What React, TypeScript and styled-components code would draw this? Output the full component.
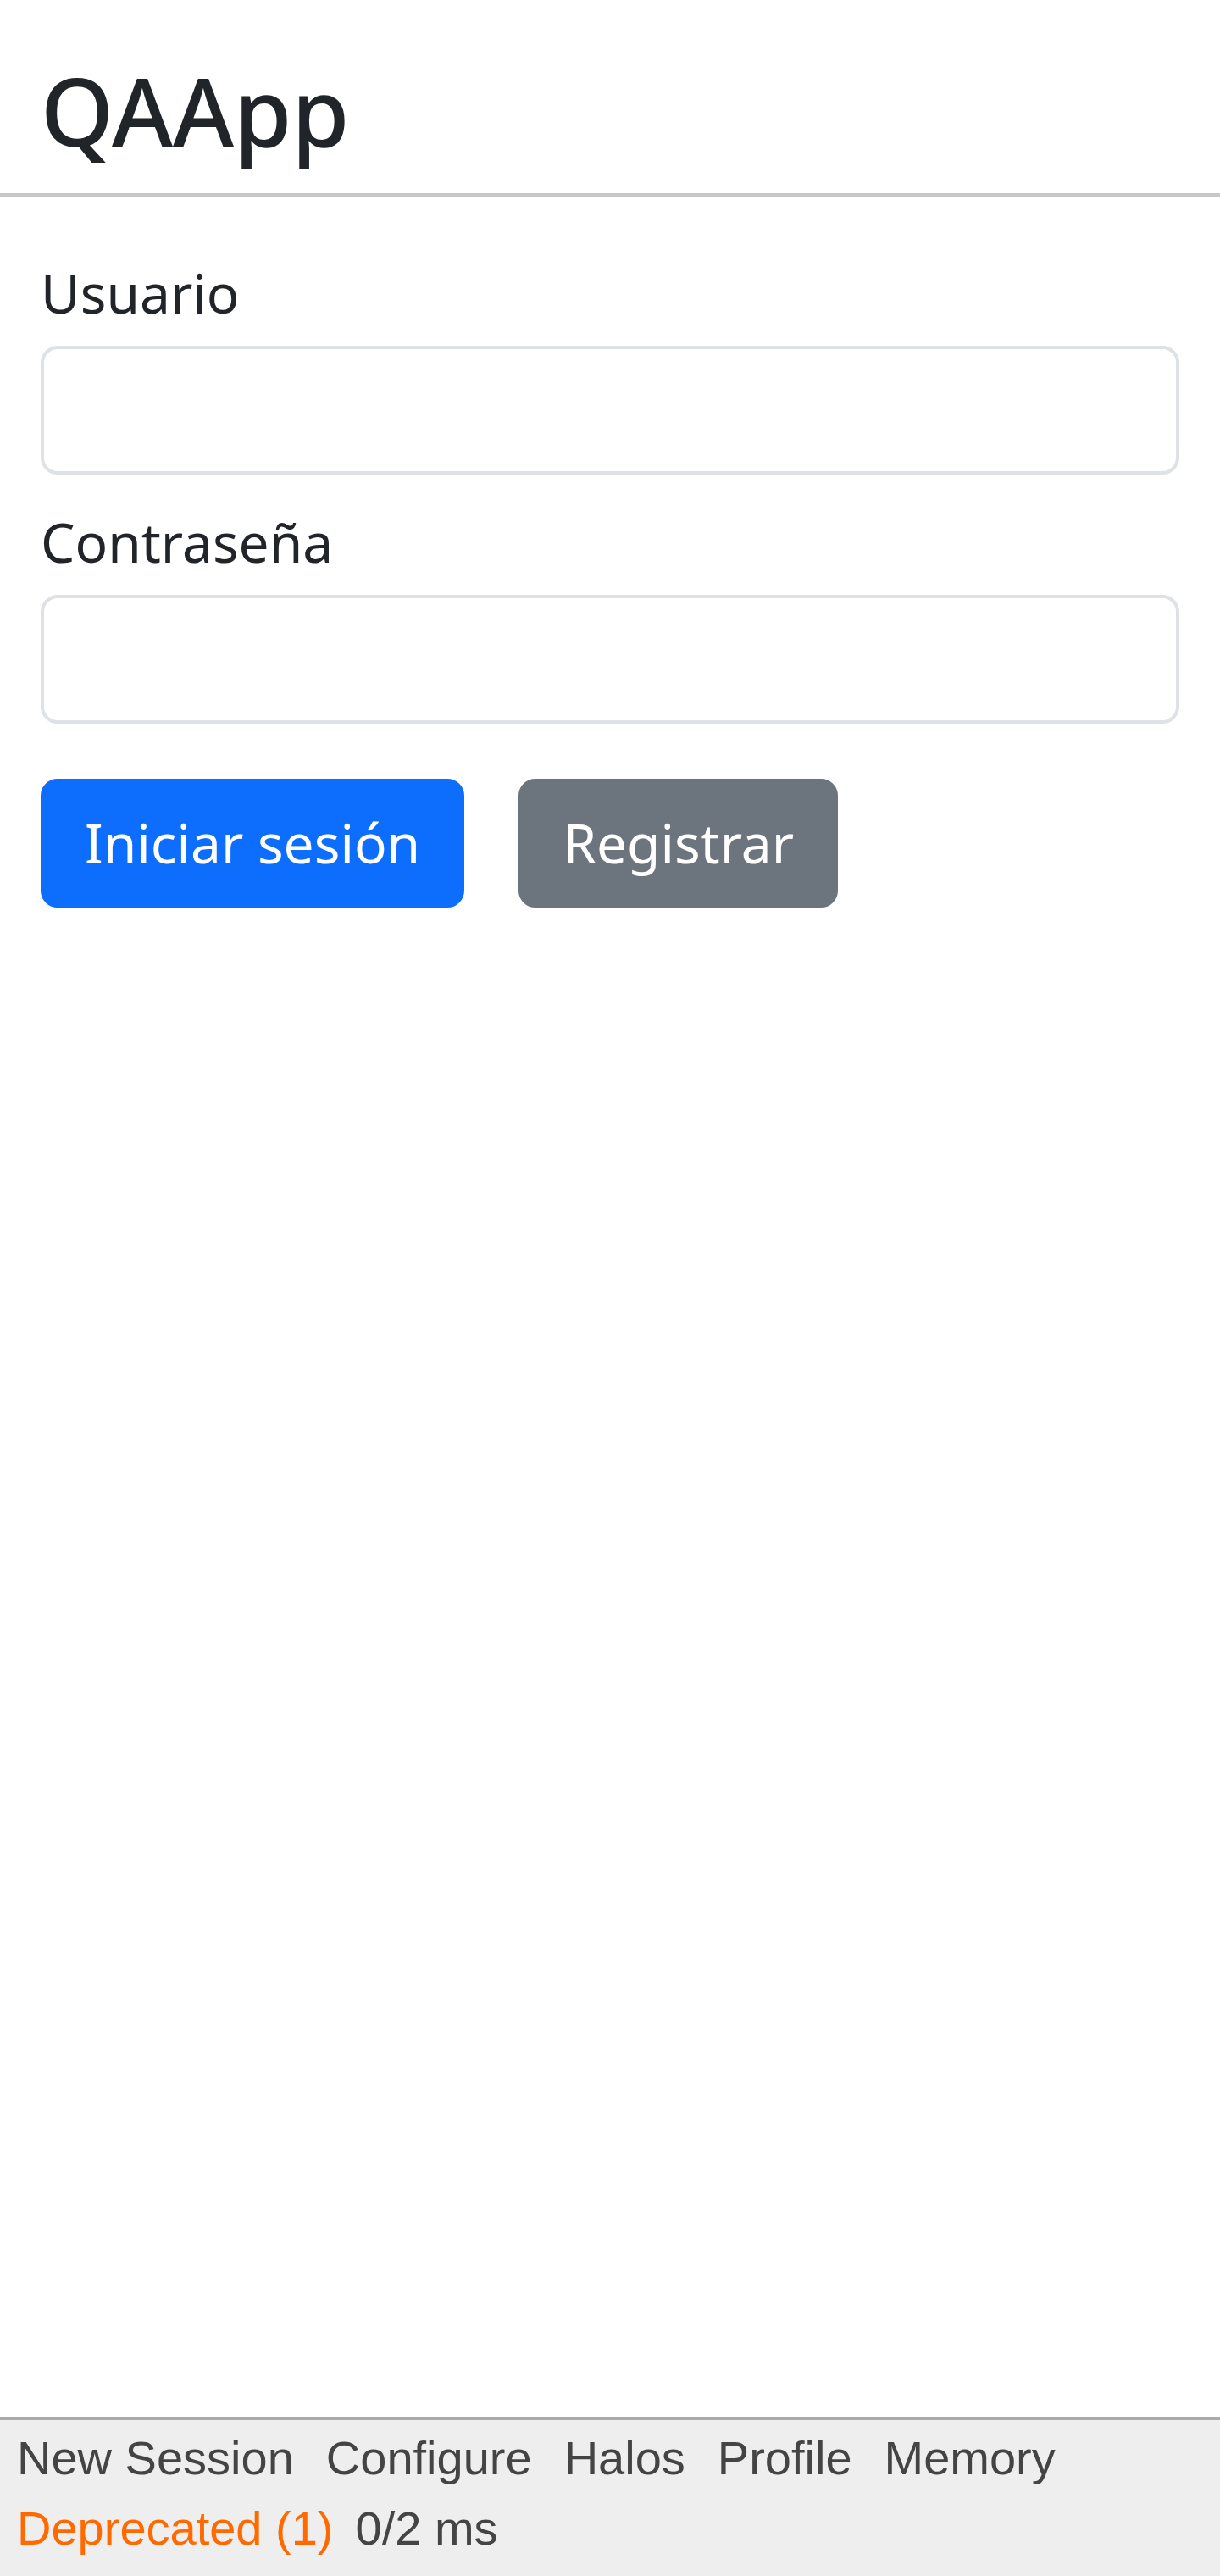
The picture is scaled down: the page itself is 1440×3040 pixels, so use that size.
import React from "react";
import styled, { createGlobalStyle } from "styled-components";

const GlobalStyle = createGlobalStyle`
  html, body { margin: 0; padding: 0; background: #fff; }
  * { box-sizing: border-box; }
`;

const Page = styled.div`
  min-height: 100vh;
  display: flex;
  flex-direction: column;
  font-family: "Noto Sans", "Open Sans", sans-serif;
  color: #212529;
`;

const Header = styled.header`
  padding: 64px 48px 0;
  border-bottom: 4px solid #c8c8c8;
`;

const Title = styled.h1`
  margin: 0 0 32px;
  font-size: 110px;
  font-weight: 500;
  line-height: 1.2;
  color: #212529;
`;

const Main = styled.main`
  flex: 1;
  display: flex;
  flex-direction: column;
  padding: 66px 48px 0;
`;

const Field = styled.div`
  margin-bottom: 32px;
`;

const Label = styled.label`
  display: block;
  font-size: 64px;
  line-height: 96px;
  margin-bottom: 14px;
`;

const Input = styled.input`
  display: block;
  width: 100%;
  height: 152px;
  padding: 0 48px;
  font-family: inherit;
  font-size: 64px;
  color: #212529;
  background: #fff;
  border: 4px solid #dee2e6;
  border-radius: 20px;
  outline: none;
`;

const ButtonRow = styled.div`
  display: flex;
  gap: 64px;
  margin-top: 33px;
`;

const Button = styled.button<{ $variant: "primary" | "secondary" }>`
  height: 152px;
  padding: 0 48px;
  font-family: inherit;
  font-size: 64px;
  line-height: 96px;
  color: #fff;
  background: ${(p) => (p.$variant === "primary" ? "#0d6efd" : "#6c757d")};
  border: 4px solid ${(p) => (p.$variant === "primary" ? "#0d6efd" : "#6c757d")};
  border-radius: 20px;
  cursor: pointer;
`;

const Toolbar = styled.footer`
  background: #eeeeee;
  border-top: 4px solid #aaaaaa;
  padding: 3px 16px 15px 20px;
  display: flex;
  flex-wrap: wrap;
  column-gap: 38px;
  font-family: "Liberation Sans", Arial, sans-serif;
  font-size: 56px;
  line-height: 83px;
`;

const ToolLink = styled.a<{ $warn?: boolean }>`
  color: ${(p) => (p.$warn ? "#ff6a00" : "#444444")};
  text-decoration: none;
  white-space: nowrap;
`;

const ToolText = styled.span`
  color: #444444;
  white-space: nowrap;
  margin-left: -12px;
`;

export default function App() {
  return (
    <>
      <GlobalStyle />
      <Page>
        <Header>
          <Title>QAApp</Title>
        </Header>
        <Main>
          <Field>
            <Label htmlFor="user">Usuario</Label>
            <Input id="user" type="text" />
          </Field>
          <Field>
            <Label htmlFor="pass">Contraseña</Label>
            <Input id="pass" type="password" />
          </Field>
          <ButtonRow>
            <Button $variant="primary">Iniciar sesión</Button>
            <Button $variant="secondary">Registrar</Button>
          </ButtonRow>
        </Main>
        <Toolbar>
          <ToolLink href="#">New Session</ToolLink>
          <ToolLink href="#">Configure</ToolLink>
          <ToolLink href="#">Halos</ToolLink>
          <ToolLink href="#">Profile</ToolLink>
          <ToolLink href="#">Memory</ToolLink>
          <ToolLink href="#" $warn>Deprecated (1)</ToolLink>
          <ToolText>0/2 ms</ToolText>
        </Toolbar>
      </Page>
    </>
  );
}
